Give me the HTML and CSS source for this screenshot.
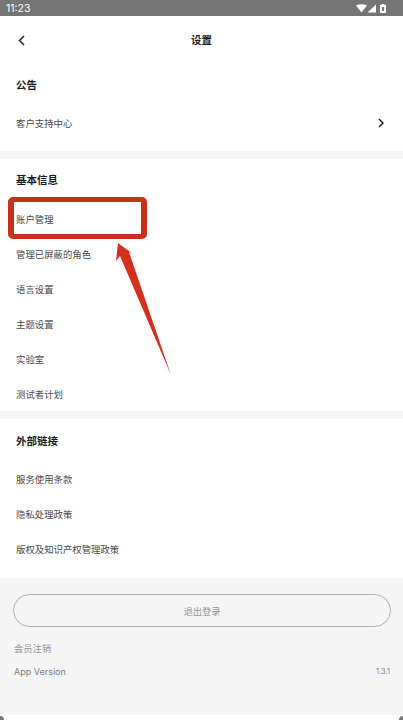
FILE: index.html
```html
<!DOCTYPE html>
<html lang="zh-CN">
<head>
    <meta charset="UTF-8">
    <meta name="viewport" content="width=device-width, initial-scale=1.0">
    <title>设置</title>
    <link rel="stylesheet" href="styles.css">
</head>
<body>
    <div class="phone">
        <div class="status-bar">
            <span class="clock">11:23</span>
            <svg width="30" height="9" viewBox="0 0 30 9">
                <path d="M0 1.6 Q5.5 -1 11 1.6 L5.5 8.5 Z" fill="#fff"/>
                <path d="M11.5 8.5 L20 0.5 V8.5 Z" fill="#fff"/>
                <path d="M25.5 1 V0 H28.5 V1 H30 V9 H24 V1 Z M26 3 V7 H28 V3 Z" fill="#fff" fill-rule="evenodd"/>
            </svg>
        </div>

        <div class="top-bar">
            <svg class="back" width="7" height="11" viewBox="0 0 7 11">
                <path d="M6 1 L1.5 5.5 L6 10" fill="none" stroke="#222" stroke-width="1.5"/>
            </svg>
            <h1>设置</h1>
        </div>

        <section class="group group-notice">
            <h2>公告</h2>
            <div class="row">
                <span>客户支持中心</span>
                <svg class="chevron" width="6" height="10" viewBox="0 0 6 10">
                    <path d="M1 1 L5 5 L1 9" fill="none" stroke="#222" stroke-width="1.5"/>
                </svg>
            </div>
        </section>

        <section class="group">
            <h2>基本信息</h2>
            <div class="row">账户管理</div>
            <div class="row">管理已屏蔽的角色</div>
            <div class="row">语言设置</div>
            <div class="row">主题设置</div>
            <div class="row">实验室</div>
            <div class="row">测试者计划</div>
        </section>

        <section class="group group-links">
            <h2>外部链接</h2>
            <div class="row">服务使用条款</div>
            <div class="row">隐私处理政策</div>
            <div class="row">版权及知识产权管理政策</div>
        </section>

        <footer class="account">
            <div class="logout">退出登录</div>
            <div class="cancel">会员注销</div>
            <div class="version">
                <span>App Version</span>
                <span class="version-num">1.3.1</span>
            </div>
        </footer>

        <div class="highlight"></div>
        <svg class="arrow" width="70" height="150" viewBox="0 0 70 150">
            <path d="M12 9 L27 20 L23 18 L65 141 L14 22 L10 27 Z" fill="#d5301c"/>
        </svg>
        <div class="corner corner-left"></div>
        <div class="corner corner-right"></div>
    </div>
</body>
</html>
```

FILE: styles.css
```css
:root {
    --text-dark: #1c1c1c;
    --text: #4a4a4a;
    --band: #f5f5f5;
    --muted: #959595;
    --red: #c9301c;
}

* {
    margin: 0;
    padding: 0;
    box-sizing: border-box;
    font-family: 'Inter', 'Noto Sans CJK SC', sans-serif;
}

body {
    background: #ffffff;
    width: 403px;
    height: 720px;
    overflow: hidden;
}

.phone {
    position: relative;
    width: 403px;
    height: 720px;
    overflow: hidden;
}

.status-bar {
    height: 16px;
    background: #757575;
    color: #ffffff;
    display: flex;
    justify-content: space-between;
    align-items: center;
    padding: 0 17px 0 6px;
}

.clock {
    font-size: 10.5px;
}

.top-bar {
    position: relative;
    height: 48px;
    padding-bottom: 2px;
    display: flex;
    justify-content: center;
    align-items: center;
}

.back {
    position: absolute;
    left: 18px;
    top: 19px;
}

h1 {
    font-size: 10.5px;
    font-weight: 700;
    color: var(--text-dark);
}

.group {
    padding: 14px 16px 0;
    border-bottom: 8px solid var(--band);
}

.group-notice {
    height: 95px;
}

.group h2 {
    font-size: 10.5px;
    line-height: 16px;
    font-weight: 700;
    color: var(--text-dark);
    margin-bottom: 12px;
}

.group-notice h2 {
    margin-bottom: 11px;
}

.row {
    display: flex;
    justify-content: space-between;
    align-items: center;
    height: 35px;
    font-size: 9.4px;
    color: var(--text);
}

.chevron {
    margin-right: 3px;
}

.group-links {
    padding-top: 15px;
    border-bottom: none;
}

.group-links h2 {
    margin-bottom: 11px;
}

.account {
    background: var(--band);
    height: 137px;
    margin-top: 12px;
    padding: 16px 12px 0 13px;
}

.logout {
    height: 33px;
    border: 1px solid #b0b0b0;
    border-radius: 17px;
    display: flex;
    justify-content: center;
    align-items: center;
    font-size: 9.3px;
    color: var(--muted);
}

.cancel {
    margin-top: 15px;
    padding-left: 1px;
    font-size: 9.3px;
    line-height: 14px;
    color: var(--muted);
}

.version {
    display: flex;
    justify-content: space-between;
    align-items: center;
    margin-top: 9px;
    padding: 0 1px;
    font-size: 9px;
    line-height: 14px;
    color: #808080;
}

.version-num {
    font-size: 7.5px;
}

.highlight {
    position: absolute;
    left: 8px;
    top: 197px;
    width: 139px;
    height: 42px;
    border: 5px solid var(--red);
    border-width: 5px 6px;
    border-radius: 5px;
}

.arrow {
    position: absolute;
    left: 106px;
    top: 234px;
}

.corner {
    position: absolute;
    bottom: 0;
    width: 4px;
    height: 4px;
    background: #777777;
}

.corner-left {
    left: 0;
    border-top-right-radius: 4px;
}

.corner-right {
    right: 0;
    border-top-left-radius: 4px;
}
```
